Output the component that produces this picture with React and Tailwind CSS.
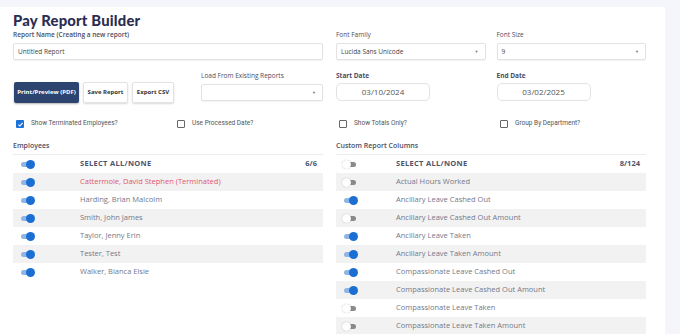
import React from 'react';

const employees = [
  { name: 'Cattermole, David Stephen (Terminated)', on: true, terminated: true },
  { name: 'Harding, Brian Malcolm', on: true },
  { name: 'Smith, John James', on: true },
  { name: 'Taylor, Jenny Erin', on: true },
  { name: 'Tester, Test', on: true },
  { name: 'Walker, Bianca Elsie', on: true },
];

const columns = [
  { name: 'Actual Hours Worked', on: false },
  { name: 'Ancillary Leave Cashed Out', on: true },
  { name: 'Ancillary Leave Cashed Out Amount', on: false },
  { name: 'Ancillary Leave Taken', on: true },
  { name: 'Ancillary Leave Taken Amount', on: true },
  { name: 'Compassionate Leave Cashed Out', on: true },
  { name: 'Compassionate Leave Cashed Out Amount', on: true },
  { name: 'Compassionate Leave Taken', on: false },
  { name: 'Compassionate Leave Taken Amount', on: false },
];

function Toggle({ on }) {
  return (
    <div className="relative w-[14px] h-[9px] flex items-center">
      <div className={`w-[12px] h-[5px] rounded-full ml-[1px] ${on ? 'bg-[#8fb4e6]' : 'bg-[#8a8a8a]'}`} />
      <div
        className={`absolute top-0 w-[9px] h-[9px] rounded-full ${
          on ? 'left-[6px] bg-[#1b6fd3]' : 'left-[-1px] bg-white shadow-[0_0_1px_rgba(0,0,0,0.35)]'
        }`}
      />
    </div>
  );
}

function Checkbox({ checked, label }) {
  return (
    <div className="flex items-center gap-[7px] pl-[3px]">
      {checked ? (
        <div className="w-[8px] h-[8px] rounded-[1px] bg-[#1c72d8] flex items-center justify-center">
          <svg viewBox="0 0 10 10" className="w-[7px] h-[7px]">
            <path d="M2 5.2 L4.1 7.2 L8 2.8" fill="none" stroke="white" strokeWidth="1.6" />
          </svg>
        </div>
      ) : (
        <div className="w-[8px] h-[8px] rounded-[1px] border border-[#666]" />
      )}
      <span className="text-[6.5px] text-[#555] font-['Roboto',sans-serif]">{label}</span>
    </div>
  );
}

function ToggleTable({ title, count, items, headerOn, textX }) {
  return (
    <div>
      <div className="h-[12px] mt-[4px] flex items-center text-[7px] font-semibold text-[#4a4d63]">{title}</div>
      <div className="mt-[2px] border-t border-[#ececec]">
        <div className="h-[18px] flex items-center bg-white">
          <div className="w-[7px]" />
          <Toggle on={headerOn} />
          <div className={`${textX} text-[7.5px] font-bold tracking-[0.3px] text-[#50536c] flex-1`}>SELECT ALL/NONE</div>
          <div className="text-[7.5px] font-bold text-[#50536c] pr-[6px]">{count}</div>
        </div>
        {items.map((it, i) => (
          <div key={it.name} className={`h-[18px] flex items-center ${i % 2 === 0 ? 'bg-[#f2f2f2]' : 'bg-white'}`}>
            <div className="w-[7px]" />
            <Toggle on={it.on} />
            <div className={`${textX} text-[7.5px] ${it.terminated ? 'text-[#e05670]' : 'text-[#757889]'}`}>{it.name}</div>
          </div>
        ))}
      </div>
    </div>
  );
}

function Field({ label, value, arrow, bold }) {
  return (
    <div>
      <div className={`h-[12px] flex items-center text-[6.5px] text-[#4a4d63] ${bold ? 'font-semibold' : ''}`}>{label}</div>
      <div className="mt-[2px] h-[17px] border border-[#e2e2e2] rounded-[2px] shadow-[0_1px_1px_rgba(0,0,0,0.05)] flex items-center justify-between px-[4px] bg-white">
        <span className="text-[6.5px] text-[#444]">{value}</span>
        {arrow && <span className="text-[4px] text-[#777] pr-[2px]">▼</span>}
      </div>
    </div>
  );
}

function DateField({ label, value }) {
  return (
    <div>
      <div className="h-[12px] flex items-center text-[6.5px] font-bold text-[#4a4d63]">{label}</div>
      <div className="mt-[1px] w-[94px] h-[18px] border border-[#e2e2e2] rounded-[5px] flex items-center justify-center bg-white">
        <span className="text-[8px] text-[#555]">{value}</span>
      </div>
    </div>
  );
}

export default function App() {
  return (
    <div className="w-[680px] h-[334px] overflow-hidden bg-[#f5f6fb] font-['Open_Sans',sans-serif]">
      <div className="mt-[7px] w-[665px] h-[327px] bg-white pl-[13px] pr-[19px]">
        <h1 className="pt-[4px] h-[22px] text-[14.8px] font-black text-[#2b2d52] font-['Lato',sans-serif] leading-[18px] tracking-[0.2px]">
          Pay Report Builder
        </h1>
        <div className="grid grid-cols-[310px_310px] gap-x-[13px]">
          <Field label="Report Name (Creating a new report)" value="Untitled Report" bold />
          <div className="grid grid-cols-2 gap-x-[11px]">
            <Field label="Font Family" value="Lucida Sans Unicode" arrow />
            <Field label="Font Size" value="9" arrow />
          </div>
        </div>

        <div className="grid grid-cols-[310px_310px] gap-x-[13px] mt-[10px]">
          <div className="flex items-end">
            <div className="flex gap-[4px] pl-[1px]">
              <button className="h-[21px] w-[65px] rounded-[2px] bg-[#2d4470] text-white text-[6px] font-bold shadow-[0_1px_2px_rgba(0,0,0,0.3)]">
                Print/Preview (PDF)
              </button>
              <button className="h-[21px] w-[45px] rounded-[2px] bg-white border border-[#e4e4e4] text-[#333] text-[6px] font-bold shadow-[0_1px_2px_rgba(0,0,0,0.15)]">
                Save Report
              </button>
              <button className="h-[21px] w-[42px] rounded-[2px] bg-white border border-[#e4e4e4] text-[#333] text-[6px] font-bold shadow-[0_1px_2px_rgba(0,0,0,0.15)]">
                Export CSV
              </button>
            </div>
            <div className="ml-auto w-[122px] pb-[2px]">
              <Field label="Load From Existing Reports" value="" arrow />
            </div>
          </div>
          <div className="grid grid-cols-2 gap-x-[11px]">
            <DateField label="Start Date" value="03/10/2024" />
            <DateField label="End Date" value="03/02/2025" />
          </div>
        </div>

        <div className="grid grid-cols-[161px_162px_161px_149px] mt-[15px] h-[12px] items-center">
          <Checkbox checked label="Show Terminated Employees?" />
          <Checkbox label="Use Processed Date?" />
          <Checkbox label="Show Totals Only?" />
          <Checkbox label="Group By Department?" />
        </div>

        <div className="grid grid-cols-[310px_310px] gap-x-[13px] mt-[6px]">
          <ToggleTable title="Employees" count="6/6" items={employees} headerOn textX="pl-[46px]" />
          <ToggleTable title="Custom Report Columns" count="8/124" items={columns} headerOn={false} textX="pl-[39px]" />
        </div>
      </div>
    </div>
  );
}
